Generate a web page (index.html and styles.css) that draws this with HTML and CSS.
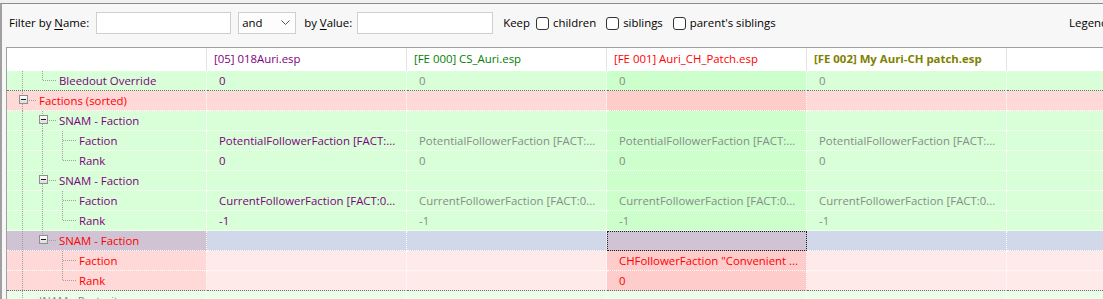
FILE: index.html
```html
<!DOCTYPE html>
<html>
<head>
<meta charset="utf-8">
<link rel="stylesheet" href="styles.css">
</head>
<body>
<div class="window">
  <div class="bar">
    <span class="lbl">Filter by <u>N</u>ame:</span>
    <span class="inp inp-name"></span>
    <span class="sel">and<svg class="chev" width="9" height="6" viewBox="0 0 9 6"><path d="M0.5 0.5 L4.5 4.5 L8.5 0.5" fill="none" stroke="#555" stroke-width="1"/></svg></span>
    <span class="lbl lbl-val">by <u>V</u>alue:</span>
    <span class="inp inp-val"></span>
    <span class="lbl keep">Keep</span>
    <span class="cb"></span><span class="lbl cbl">children</span>
    <span class="cb"></span><span class="lbl cbl">siblings</span>
    <span class="cb"></span><span class="lbl cbl">parent's siblings</span>
    <span class="lbl legend">Legend</span>
  </div>
  <div class="grid">
    <div class="row head">
      <div class="c t"></div>
      <div class="c purple">[05] 018Auri.esp</div>
      <div class="c green-t">[FE 000] CS_Auri.esp</div>
      <div class="c red">[FE 001] Auri_CH_Patch.esp</div>
      <div class="c olive">[FE 002] My Auri-CH patch.esp</div>
      <div class="c fill"></div>
    </div>

    <div class="row rg grp">
      <div class="c t"><span class="g v"></span><span class="g en"></span><span class="tx purple">Bleedout Override</span></div>
      <div class="c purple">0</div><div class="c gray">0</div><div class="c win gray">0</div><div class="c gray">0</div><div class="c fill"></div>
    </div>

    <div class="row rr">
      <div class="c t"><span class="g bx ud"><i class="box"></i></span><span class="tx red">Factions (sorted)</span></div>
      <div class="c"></div><div class="c"></div><div class="c win"></div><div class="c"></div><div class="c fill"></div>
    </div>

    <div class="row rg">
      <div class="c t"><span class="g v"></span><span class="g bx ud"><i class="box"></i></span><span class="tx purple">SNAM - Faction</span></div>
      <div class="c"></div><div class="c"></div><div class="c win"></div><div class="c"></div><div class="c fill"></div>
    </div>
    <div class="row rg">
      <div class="c t"><span class="g v"></span><span class="g v"></span><span class="g te"></span><span class="tx purple">Faction</span></div>
      <div class="c purple">PotentialFollowerFaction [FACT:...</div><div class="c gray">PotentialFollowerFaction [FACT:...</div><div class="c win gray">PotentialFollowerFaction [FACT:...</div><div class="c gray">PotentialFollowerFaction [FACT:...</div><div class="c fill"></div>
    </div>
    <div class="row rg">
      <div class="c t"><span class="g v"></span><span class="g v"></span><span class="g en"></span><span class="tx purple">Rank</span></div>
      <div class="c purple">0</div><div class="c gray">0</div><div class="c win gray">0</div><div class="c gray">0</div><div class="c fill"></div>
    </div>

    <div class="row rg">
      <div class="c t"><span class="g v"></span><span class="g bx ud"><i class="box"></i></span><span class="tx purple">SNAM - Faction</span></div>
      <div class="c"></div><div class="c"></div><div class="c win"></div><div class="c"></div><div class="c fill"></div>
    </div>
    <div class="row rg">
      <div class="c t"><span class="g v"></span><span class="g v"></span><span class="g te"></span><span class="tx purple">Faction</span></div>
      <div class="c purple">CurrentFollowerFaction [FACT:0...</div><div class="c gray">CurrentFollowerFaction [FACT:0...</div><div class="c win gray">CurrentFollowerFaction [FACT:0...</div><div class="c gray">CurrentFollowerFaction [FACT:0...</div><div class="c fill"></div>
    </div>
    <div class="row rg">
      <div class="c t"><span class="g v"></span><span class="g v"></span><span class="g en"></span><span class="tx purple">Rank</span></div>
      <div class="c purple">-1</div><div class="c gray">-1</div><div class="c win gray">-1</div><div class="c gray">-1</div><div class="c fill"></div>
    </div>

    <div class="row rs">
      <div class="c t"><span class="g v"></span><span class="g bx u"><i class="box"></i></span><span class="tx red">SNAM - Faction</span></div>
      <div class="c"></div><div class="c"></div><div class="c win focus"></div><div class="c"></div><div class="c fill"></div>
    </div>
    <div class="row rp">
      <div class="c t"><span class="g v"></span><span class="g"></span><span class="g te"></span><span class="tx red">Faction</span></div>
      <div class="c"></div><div class="c"></div><div class="c win red">CHFollowerFaction "Convenient ...</div><div class="c"></div><div class="c fill"></div>
    </div>
    <div class="row rp grp">
      <div class="c t"><span class="g v"></span><span class="g"></span><span class="g en"></span><span class="tx red">Rank</span></div>
      <div class="c"></div><div class="c"></div><div class="c win red">0</div><div class="c"></div><div class="c fill"></div>
    </div>

    <div class="row rl">
      <div class="c t"><span class="g te"></span><span class="tx gray">INAM - Portrait</span></div>
      <div class="c"></div><div class="c"></div><div class="c win"></div><div class="c"></div><div class="c fill"></div>
    </div>
  </div>
</div>
</body>
</html>
```
FILE: styles.css
```css
* { box-sizing: border-box; }
html, body { margin: 0; padding: 0; }
body {
  width: 1103px;
  height: 299px;
  overflow: hidden;
  background: #f0f0f0;
  font-family: "Open Sans", "Noto Sans", sans-serif;
  font-size: 11.4px;
  color: #000;
}
.window {
  margin-top: 3px;
  height: 296px;
  border-top: 1px solid #8c8c8c;
  border-left: 2px solid #a0a0a0;
  background: #f7f7f7;
  overflow: hidden;
}

/* filter bar */
.bar {
  display: flex;
  align-items: flex-start;
  height: 43px;
  padding: 8px 0 0 7px;
  white-space: nowrap;
}
.lbl { line-height: 22px; height: 22px; }
.lbl u { text-decoration: underline; text-underline-offset: 2px; }
.inp {
  height: 22px;
  background: #fff;
  border: 1px solid #cfcfcf;
}
.inp-name { width: 135px; margin-left: 7px; }
.sel {
  width: 58px;
  height: 22px;
  margin-left: 7px;
  background: #fdfdfd;
  border: 1px solid #cfcfcf;
  padding-left: 3px;
  line-height: 20px;
  display: flex;
  justify-content: space-between;
  align-items: center;
}
.chev { margin-right: 5px; }
.lbl-val { margin-left: 8px; }
.inp-val { width: 136px; margin-left: 5px; }
.keep { margin-left: 10px; }
.cb {
  width: 13px;
  height: 13px;
  margin: 5px 4px 0 6px;
  border: 1px solid #333;
  border-radius: 3px;
  background: #fff;
}
.cbl { margin-right: 4px; }
.legend { margin-left: auto; margin-right: -5px; }

/* grid */
.grid {
  margin-left: 4px;
  border-top: 1px solid #a0a0a0;
  border-left: 1px solid #a0a0a0;
  background: #fff;
  height: 252px;
}
.row {
  display: flex;
  height: 20px;
}
.c {
  flex: none;
  width: 200px;
  height: 20px;
  padding-left: 12px;
  line-height: 19px;
  white-space: nowrap;
  overflow: hidden;
  border-right: 1px dotted #fff;
  border-bottom: 1px dotted #fff;
}
.c.fill { flex: 1; border-right: 0; }
.c.t {
  width: 200px;
  padding-left: 5px;
  display: flex;
  align-items: flex-start;
  overflow: visible;
}
.row.head { height: 23px; background: #fff; }
.row.head .c {
  height: 23px;
  line-height: 22px;
  padding-left: 7px;
  border-right: 1px solid #e3e3e3;
  border-bottom: 0;
}
.row.head .c.fill { border-right: 0; }
.row.grp .c { border-bottom-color: #6e6e6e; }

/* row colours */
.rg .c { background: #d8ffd8; }
.rg .c.win { background: #ccffcc; }
.rr .c { background: #ffd8d8; }
.rr .c.win { background: #ffcccc; }
.rs .c { background: #d1d8e9; }
.rs .c.t, .rs .c.win { background: #d0c3d3; }
.rs .c.focus { outline: 1px dotted #222; outline-offset: -1px; }
.rp .c { background: #ffeaea; }
.rp .c.t { background: #ffd8d8; }
.rp .c.win { background: #ffcccc; }
.rl .c { background: #eaffea; }

/* text colours */
.purple { color: #800080; }
.gray { color: #8a8a8a; }
.red { color: #ff0000; }
.green-t { color: #008000; }
.olive { color: #808000; font-weight: 700; }
.tx { padding-left: 7px; line-height: 19px; }

/* tree guides */
.g {
  position: relative;
  flex: none;
  width: 20px;
  height: 19px;
}
.v::before, .te::before, .en::before {
  content: "";
  position: absolute;
  left: 10px;
  top: 0;
  bottom: -1px;
  width: 1px;
  background: repeating-linear-gradient(to bottom, #a0a0a0 0 1px, transparent 1px 2px);
}
.en::before { bottom: auto; height: 10px; }
.te::after, .en::after {
  content: "";
  position: absolute;
  left: 11px;
  top: 9px;
  width: 13px;
  height: 1px;
  background: repeating-linear-gradient(to right, #a0a0a0 0 1px, transparent 1px 2px);
}
.bx.u::before, .bx.ud::before {
  content: "";
  position: absolute;
  left: 10px;
  top: 0;
  height: 4px;
  width: 1px;
  background: repeating-linear-gradient(to bottom, #a0a0a0 0 1px, transparent 1px 2px);
}
.bx.ud::after {
  content: "";
  position: absolute;
  left: 10px;
  top: 13px;
  bottom: -1px;
  width: 1px;
  background: repeating-linear-gradient(to bottom, #a0a0a0 0 1px, transparent 1px 2px);
}
.box {
  position: absolute;
  left: 7px;
  top: 4px;
  width: 9px;
  height: 9px;
  border: 1px solid #8e8f8f;
  background: linear-gradient(#ffffff, #dcdcdc);
}
.box::before {
  content: "";
  position: absolute;
  left: 1px;
  top: 3px;
  width: 5px;
  height: 1px;
  background: #1d1d1d;
}
.box::after {
  content: "";
  position: absolute;
  left: 9px;
  top: 4px;
  width: 8px;
  height: 1px;
  background: repeating-linear-gradient(to right, #a0a0a0 0 1px, transparent 1px 2px);
}
```
